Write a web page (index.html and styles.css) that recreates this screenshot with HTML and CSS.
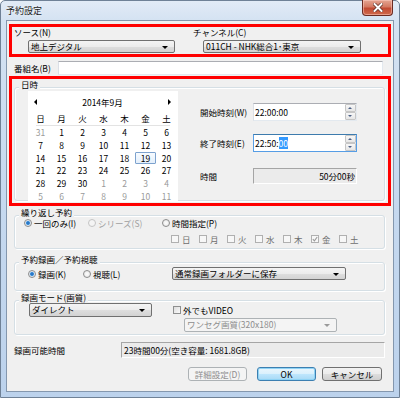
FILE: index.html
```html
<!DOCTYPE html>
<html lang="ja">
<head>
<meta charset="utf-8">
<title>予約設定</title>
<link rel="stylesheet" href="styles.css">
</head>
<body>
<div class="window">
  <div class="titlebar">
    <span class="title">予約設定</span>
    <div class="close">
      <svg width="10" height="9" viewBox="0 0 10 9"><path d="M1.5 1 L8.5 8 M8.5 1 L1.5 8" stroke="#5a2a22" stroke-width="3.4" stroke-linecap="square"/><path d="M1.5 1 L8.5 8 M8.5 1 L1.5 8" stroke="#ffffff" stroke-width="2" stroke-linecap="square"/></svg>
    </div>
  </div>
  <div class="client">
    <div class="hl hl-top">
      <div class="col col-src">
        <div class="lbl">ソース(N)</div>
        <div class="combo combo-src"><span>地上デジタル</span><i class="caret"></i></div>
      </div>
      <div class="col col-ch">
        <div class="lbl">チャンネル(C)</div>
        <div class="combo combo-ch"><span>011CH - NHK総合1･東京</span><i class="caret"></i></div>
      </div>
    </div>

    <div class="name-row">
      <span class="name-lbl">番組名(B)</span>
      <div class="edit name-edit"></div>
    </div>

    <div class="hl hl-dt">
      <div class="group g-dt">
        <div class="gtitle">日時</div>
        <div class="dt-body">
          <div class="cal">
            <div class="cal-head">
              <i class="arr arr-l"></i>
              <span>2014年9月</span>
              <i class="arr arr-r"></i>
            </div>
            <div class="cal-grid cal-dow">
              <span>日</span><span>月</span><span>火</span><span>水</span><span>木</span><span>金</span><span>土</span>
            </div>
            <div class="cal-sep"></div>
            <div class="cal-grid cal-days">
              <span class="o">31</span><span>1</span><span>2</span><span>3</span><span>4</span><span>5</span><span>6</span>
              <span>7</span><span>8</span><span>9</span><span>10</span><span>11</span><span>12</span><span>13</span>
              <span>14</span><span>15</span><span>16</span><span>17</span><span>18</span><span class="today">19</span><span>20</span>
              <span>21</span><span>22</span><span>23</span><span>24</span><span>25</span><span>26</span><span>27</span>
              <span>28</span><span>29</span><span>30</span><span class="o">1</span><span class="o">2</span><span class="o">3</span><span class="o">4</span>
              <span class="o">5</span><span class="o">6</span><span class="o">7</span><span class="o">8</span><span class="o">9</span><span class="o">10</span><span class="o">11</span>
            </div>
          </div>
          <div class="times">
            <div class="trow">
              <span class="tlbl">開始時刻(W)</span>
              <div class="edit time"><span>22:00:00</span><div class="spin"><b class="up"></b><b class="dn"></b></div></div>
            </div>
            <div class="trow trow-2">
              <span class="tlbl">終了時刻(E)</span>
              <div class="edit time focus"><span>22:50:<em class="sel">00</em></span><div class="spin"><b class="up"></b><b class="dn"></b></div></div>
            </div>
            <div class="trow trow-3">
              <span class="tlbl">時間</span>
              <div class="ro dur">50分00秒</div>
            </div>
          </div>
        </div>
      </div>
    </div>

    <div class="group g-rep">
      <div class="gtitle">繰り返し予約</div>
      <div class="rep-radios">
        <label class="opt w1"><i class="radio on"></i>一回のみ(I)</label>
        <label class="opt w2 dis"><i class="radio off-dis"></i>シリーズ(S)</label>
        <label class="opt"><i class="radio"></i>時間指定(P)</label>
      </div>
      <div class="days">
        <label class="day"><i class="check"></i>日</label>
        <label class="day"><i class="check"></i>月</label>
        <label class="day"><i class="check"></i>火</label>
        <label class="day"><i class="check"></i>水</label>
        <label class="day"><i class="check"></i>木</label>
        <label class="day"><i class="check checked"><svg width="6" height="6" viewBox="0 0 6 6"><path d="M0.8 3.2 L2.4 4.8 L5.2 1" fill="none" stroke="#9a9a9a" stroke-width="1.1"/></svg></i>金</label>
        <label class="day"><i class="check"></i>土</label>
      </div>
    </div>

    <div class="group g-rec">
      <div class="gtitle">予約録画／予約視聴</div>
      <div class="rec-row">
        <label class="opt w3"><i class="radio on"></i>録画(K)</label>
        <label class="opt w4"><i class="radio"></i>視聴(L)</label>
        <div class="combo combo-folder"><span>通常録画フォルダーに保存</span><i class="caret"></i></div>
      </div>
    </div>

    <div class="group g-mode">
      <div class="gtitle">録画モード(画質)</div>
      <div class="mode-row">
        <div class="combo combo-mode"><span>ダイレクト</span><i class="caret"></i></div>
        <div class="mode-right">
          <label class="opt"><i class="check"></i>外でもVIDEO</label>
          <div class="combo combo-dis"><span>ワンセグ画質(320x180)</span><i class="caret"></i></div>
        </div>
      </div>
    </div>

    <div class="avail-row">
      <span class="avail-lbl">録画可能時間</span>
      <div class="ro avail">23時間00分(空き容量: 1681.8GB)</div>
    </div>

    <div class="btn-row">
      <div class="btn btn-dis">詳細設定(D)</div>
      <div class="btn btn-def">OK</div>
      <div class="btn btn-cancel">キャンセル</div>
    </div>
  </div>
</div>
</body>
</html>
```

FILE: styles.css
```css
* { box-sizing: border-box; }
html, body { margin: 0; padding: 0; }
body {
  width: 400px;
  height: 398px;
  background: #ffffff;
  font-family: "Noto Sans CJK JP", "Noto Sans", sans-serif;
  font-size: 8.5px;
  line-height: 10px;
  color: #000;
  overflow: hidden;
}

.window {
  position: relative;
  width: 400px;
  height: 398px;
  border: 1px solid #6f8196;
  border-radius: 5px 5px 0 0;
  background: linear-gradient(to bottom, #e2ebf6 0px, #d4e2f2 20px, #c6d9ef 200px, #bcd2ec 398px);
  padding: 0 5px 5px 5px;
}

.titlebar {
  height: 19px;
  display: flex;
  align-items: center;
}
.title {
  font-size: 9px;
  line-height: 10px;
  color: #1a1a1a;
  text-shadow: 0 0 3px #ffffff;
}
.close {
  position: absolute;
  top: -1px;
  right: 6px;
  width: 31px;
  height: 16px;
  border: 1px solid #6b2b22;
  border-top: none;
  border-radius: 0 0 4px 4px;
  background: linear-gradient(to bottom, #e5a693 0%, #d47a63 45%, #c24a33 55%, #cf6a4c 100%);
  box-shadow: inset 0 0 0 1px rgba(255,210,200,0.5);
  display: flex;
  align-items: center;
  justify-content: center;
}

.client {
  width: 388px;
  height: 372px;
  background: #f0f0f0;
  border: 1px solid #8497ae;
}

/* red highlight boxes */
.hl {
  border: 3px solid #ff0000;
  margin-left: 2px;
  width: 382px;
}
.hl-top {
  margin-top: 3px;
  height: 33px;
  display: flex;
}
.col-src { width: 181px; padding-left: 2px; }
.col-ch { flex: 1; }
.lbl { height: 10px; white-space: nowrap; }

.combo {
  position: relative;
  height: 13px;
  border: 1px solid #707070;
  border-radius: 2px;
  background: linear-gradient(to bottom, #f4f4f4 0%, #ececec 50%, #dedede 51%, #d3d3d3 100%);
  padding-left: 2px;
  line-height: 11px;
  white-space: nowrap;
  overflow: hidden;
}
.caret {
  position: absolute;
  right: 6px;
  top: 5px;
  width: 0;
  height: 0;
  border-left: 3px solid transparent;
  border-right: 3px solid transparent;
  border-top: 3px solid #000;
}
.combo-src { margin-top: 3px; margin-left: 14px; width: 147px; }
.combo-ch { margin-top: 3px; margin-left: 10px; width: 158px; }

/* edits */
.edit {
  background: #fff;
  border: 1px solid #e3e9ef;
  border-top-color: #abadb3;
  border-left-color: #dbdfe6;
}
.name-row {
  margin-top: 4px;
  display: flex;
  align-items: center;
  padding-left: 7px;
  height: 14px;
}
.name-lbl { width: 44px; }
.name-edit { width: 325px; height: 14px; }

.hl-dt {
  margin-top: 1px;
  height: 130px;
}

/* group boxes */
.group {
  border: 1px solid #d5dfe5;
  border-radius: 3px;
  box-shadow: inset 1px 1px 0 #ffffff, 1px 1px 0 #ffffff;
}
.gtitle {
  margin-top: -9px;
  margin-bottom: -1px;
  margin-left: 4px;
  padding: 0 2px;
  background: #f0f0f0;
  width: fit-content;
  height: 10px;
  line-height: 10px;
  white-space: nowrap;
}
.g-dt {
  margin: 8px 3px 0 2px;
  height: 114px;
}
.dt-body {
  display: flex;
  padding-top: 3px;
}

/* calendar */
.cal {
  margin-left: 13px;
  width: 150px;
  height: 110px;
  background: #ffffff;
  padding: 0 2px;
}
.cal-head {
  height: 21px;
  display: flex;
  align-items: center;
  justify-content: space-between;
  padding: 0 5px 0 4px;
}
.arr { width: 0; height: 0; border-top: 3px solid transparent; border-bottom: 3px solid transparent; }
.arr-l { border-right: 3px solid #000; }
.arr-r { border-left: 3px solid #000; }
.cal-grid {
  display: grid;
  grid-template-columns: repeat(7, 21px);
  text-align: center;
}
.cal-dow span { height: 13px; line-height: 13px; }
.cal-sep { height: 1px; margin: 0 6px; background: #e3e3e3; }
.cal-days span { height: 12.8px; line-height: 12.8px; }
.cal-days .o { color: #9a9a9a; }
.cal-days .today {
  border: 1px solid #7da2ce;
  border-radius: 1px;
  background: linear-gradient(to bottom, #f7fbff, #e4effb);
  line-height: 10.8px;
}

/* times */
.times { margin-left: 22px; padding-top: 12px; }
.trow { display: flex; align-items: center; height: 18px; }
.trow-2 { margin-top: 13px; }
.trow-3 { margin-top: 16px; height: 16px; }
.tlbl { width: 53px; white-space: nowrap; }
.time {
  width: 104px;
  height: 18px;
  display: flex;
  align-items: center;
  justify-content: space-between;
  padding-left: 1px;
}
.time.focus { border-color: #569de5; border-top-color: #3d7bad; }
.sel { font-style: normal; background: #3399ff; color: #fff; }
.spin { display: flex; flex-direction: column; width: 11px; height: 16px; }
.spin b {
  position: relative;
  flex: 1;
  border: 1px solid #c6c6c6;
  border-radius: 1px;
  background: linear-gradient(to bottom, #f7f7f7, #e6e6e6);
}
.spin b::after {
  content: "";
  position: absolute;
  left: 2px;
  top: 2px;
  width: 0; height: 0;
  border-left: 2.5px solid transparent;
  border-right: 2.5px solid transparent;
}
.spin .up::after { border-bottom: 2px solid #4d6185; }
.spin .dn::after { border-top: 2px solid #4d6185; }

.ro {
  background: #ebebeb;
  border: 1px solid #ffffff;
  border-top-color: #a5a5a5;
  border-left-color: #a5a5a5;
  white-space: nowrap;
}
.dur { width: 104px; height: 16px; text-align: right; padding-right: 1px; line-height: 14px; }

/* repeat group */
.g-rep { margin: 9px 0 0 7px; width: 371px; height: 34px; }
.rep-radios { display: flex; padding-top: 2px; padding-left: 9px; height: 12px; }
.opt { display: flex; align-items: center; white-space: nowrap; height: 10px; }
.w1 { width: 64px; }
.w2 { width: 74px; }
.w3 { width: 55px; }
.w4 { width: 89px; }
.dis { color: #a0a0a0; }
.radio {
  width: 8px;
  height: 8px;
  border-radius: 50%;
  border: 1px solid #8c8c8c;
  background: radial-gradient(circle at 50% 50%, #fdfdfd 0, #e3e3e3 100%);
  margin-right: 2px;
  flex: none;
}
.radio.on {
  background: radial-gradient(circle at 50% 50%, #1d64b0 0, #3f8fda 1.6px, #dde8f2 2.4px, #f6f6f6 100%);
}
.radio.off-dis { border-color: #c4c4c4; background: #f4f4f4; }
.days { display: flex; padding-left: 156px; margin-top: 6px; height: 10px; }
.day { width: 28px; display: flex; align-items: center; }
.check {
  width: 8px;
  height: 8px;
  border: 1px solid #8e8f8f;
  background: linear-gradient(135deg, #dcdcdc, #fafafa);
  margin-right: 3px;
  flex: none;
  display: flex;
  align-items: center;
  justify-content: center;
}
.days .check { border-color: #b0b0b0; background: #f7f7f7; }
.days .day { color: #6e6e6e; }

/* record group */
.g-rec { margin: 13px 0 0 7px; width: 371px; height: 29px; }
.rec-row { display: flex; align-items: center; padding-left: 13px; margin-top: 4px; height: 13px; }
.combo-folder { width: 174px; }

/* mode group */
.g-mode { margin: 9px 0 0 7px; width: 371px; height: 35px; }
.mode-row { display: flex; padding-left: 14px; padding-top: 2px; }
.combo-mode { width: 123px; height: 14px; }
.mode-right { margin-left: 21px; padding-top: 2px; display: flex; flex-direction: column; }
.mode-right .check { margin-right: 2px; }
.combo-dis {
  margin-top: 3px;
  margin-left: 11px;
  width: 153px;
  height: 14px;
  border-color: #adb2b5;
  background: #f4f4f4;
  color: #8d8d8d;
}
.combo-dis .caret { border-top-color: #9a9a9a; }

/* availability */
.avail-row { display: flex; align-items: center; margin-top: 7px; padding-left: 7px; height: 16px; }
.avail-lbl { width: 107px; }
.avail { width: 264px; height: 16px; line-height: 14px; padding-left: 2px; }

/* buttons */
.btn-row { display: flex; justify-content: flex-end; margin-top: 9px; padding-right: 11px; }
.btn {
  height: 14px;
  border: 1px solid #707070;
  border-radius: 3px;
  background: linear-gradient(to bottom, #f2f2f2 0%, #ebebeb 50%, #dddddd 51%, #cfcfcf 100%);
  text-align: center;
  line-height: 12px;
}
.btn-dis { width: 59px; border-color: #adb2b5; background: #f4f4f4; color: #8d8d8d; }
.btn-def {
  width: 59px;
  margin-left: 10px;
  border-color: #3c7fb1;
  box-shadow: inset 0 0 0 1px #8fd3f5;
  background: linear-gradient(to bottom, #eaf6fd 0%, #d9f0fc 50%, #bee6fd 51%, #a7d9f5 100%);
}
.btn-cancel { width: 60px; margin-left: 6px; }
```
